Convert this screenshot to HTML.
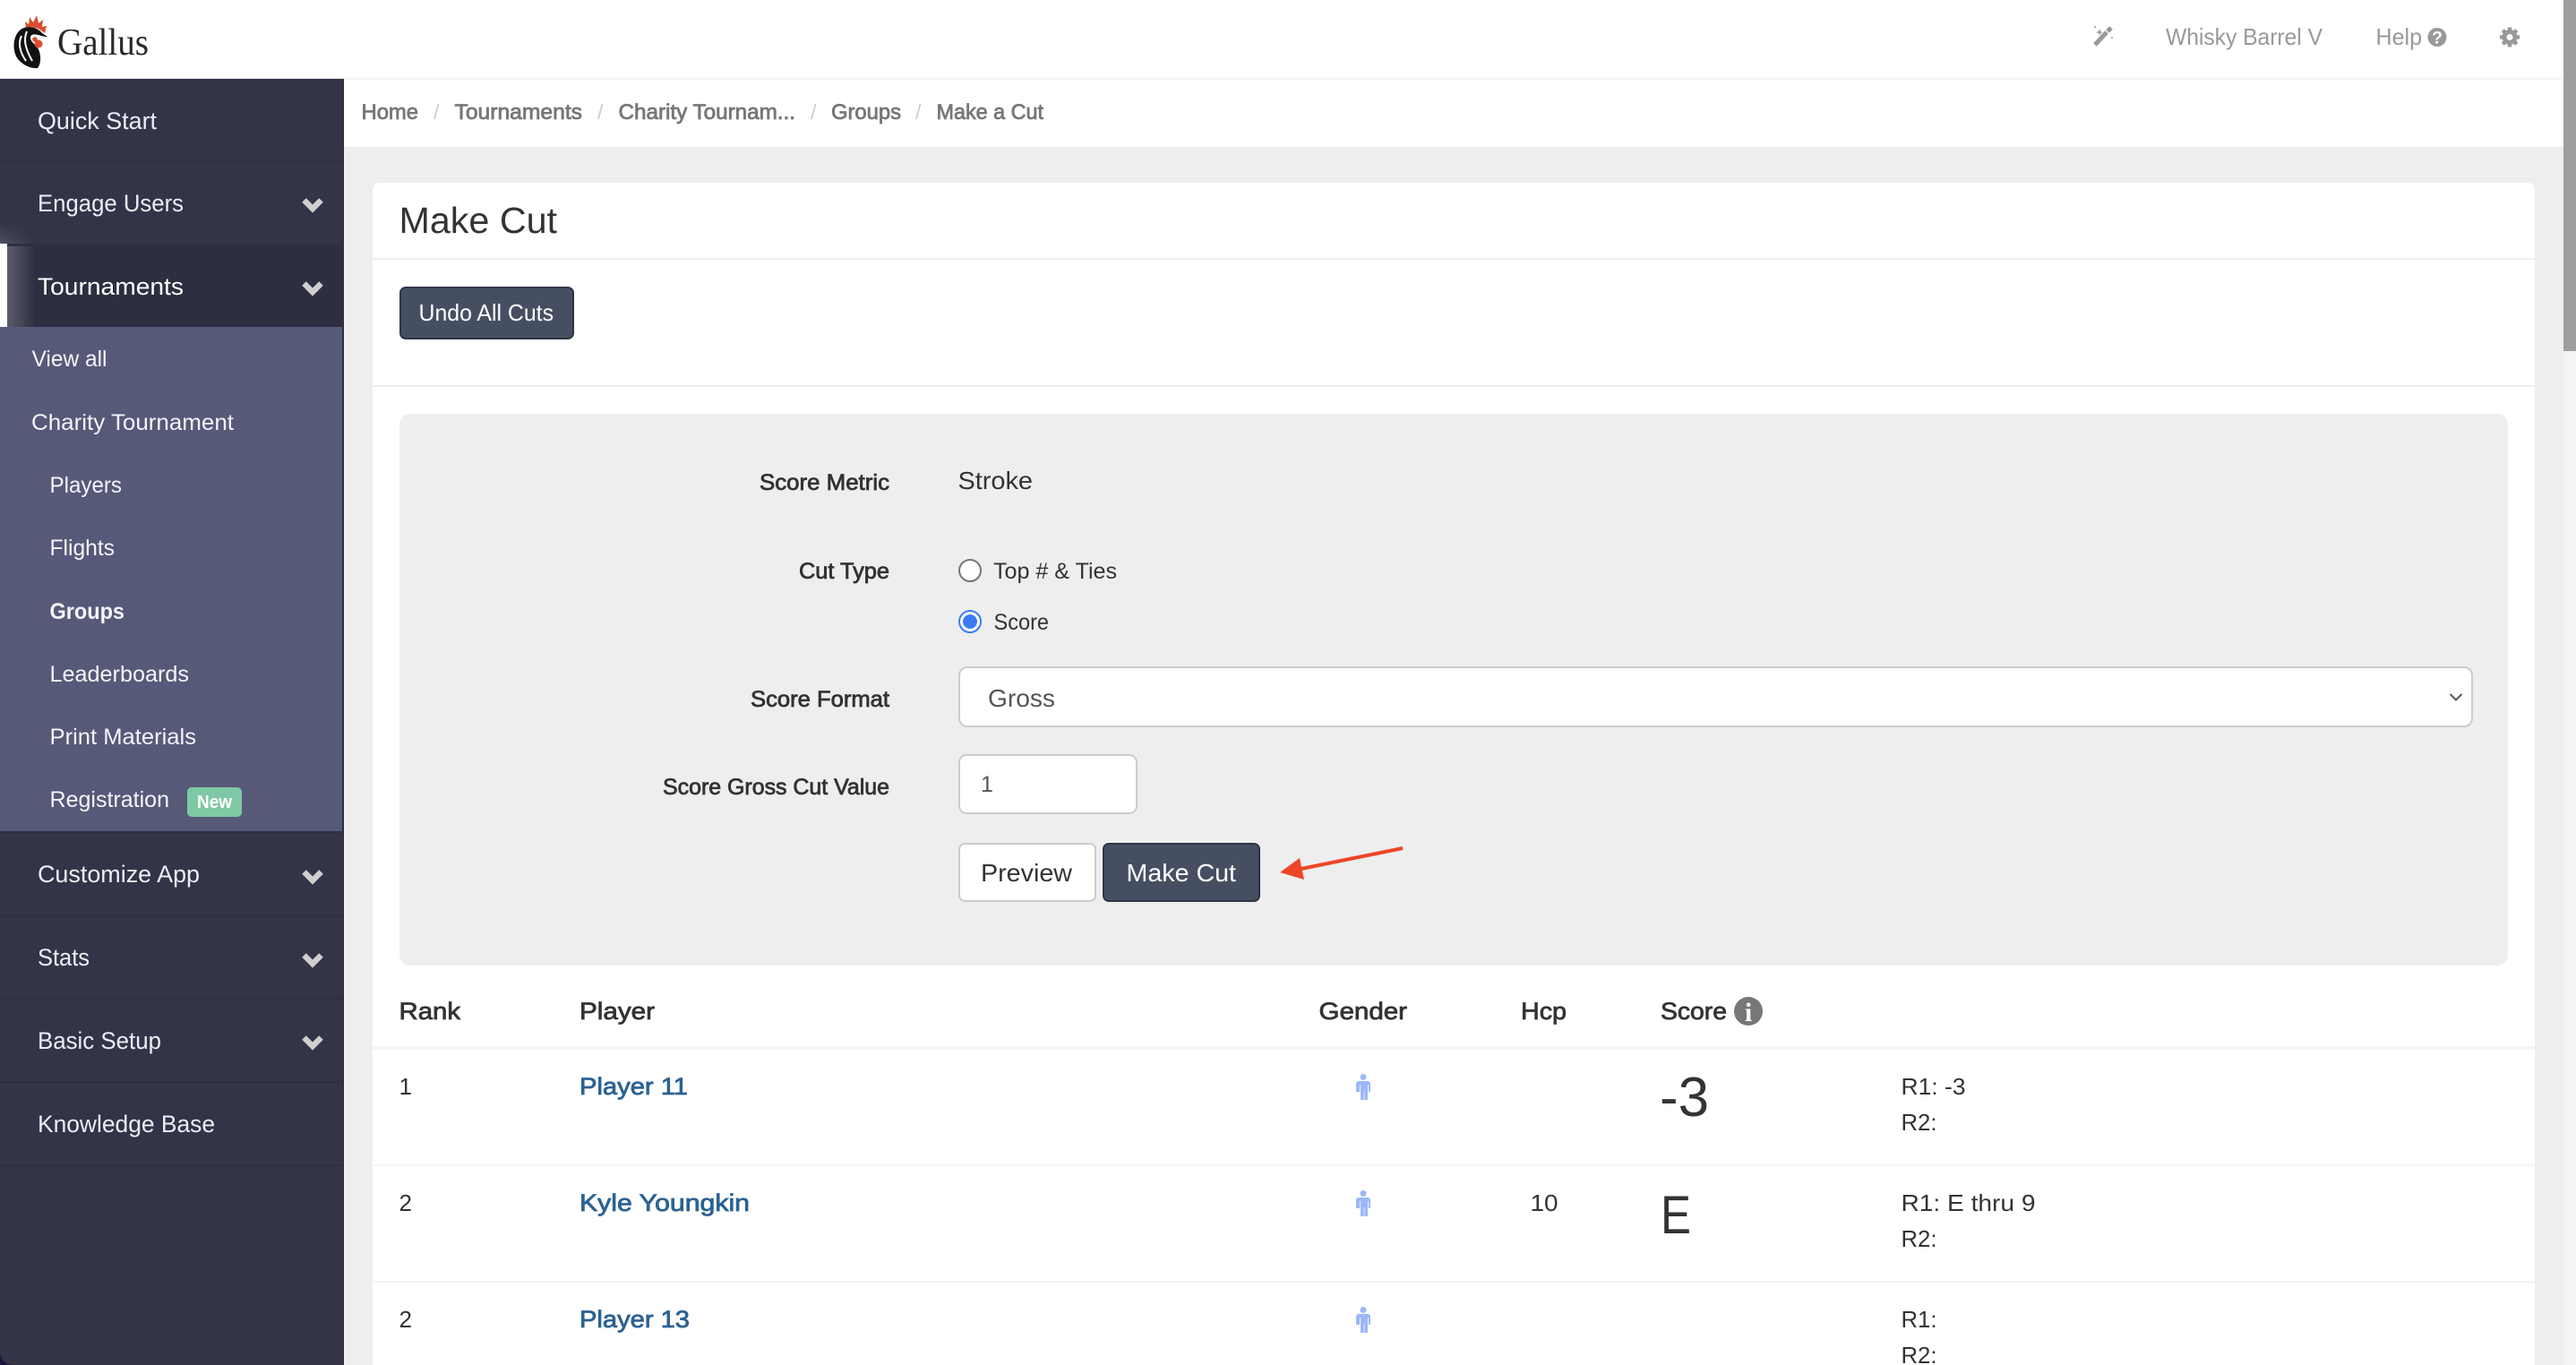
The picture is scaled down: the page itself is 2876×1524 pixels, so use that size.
<!DOCTYPE html>
<html lang="en"><head><meta charset="utf-8"><title>Make Cut</title>
<style>
html,body{margin:0;padding:0;width:2876px;height:1524px;overflow:hidden;background:#eee}
svg{display:block;position:absolute;left:0;top:0}
text{font-family:"Liberation Sans",Arial,sans-serif;white-space:pre}
.nav{font-size:27px;fill:#e9eff5}
.sub{font-size:25px;fill:#f4f5f9}
.semi{stroke-width:.8px}
.bc{font-size:24px;fill:#777;stroke:#777}
.sl{font-size:23px;fill:#ccc}
.lab{font-size:25px;fill:#333;stroke:#333}
.th{font-size:27px;fill:#333;stroke:#333}
.td{font-size:26px;fill:#333}
.lnk{font-size:27px;fill:#2b6293;stroke:#2b6293}
.top{font-size:26px;fill:#999}
</style></head><body>
<svg width="2876" height="1524" viewBox="0 0 2876 1524" xmlns="http://www.w3.org/2000/svg">
<defs>
<linearGradient id="glow" x1="0" x2="1" y1="0" y2="0"><stop offset="0" stop-color="#5b5c6e"/><stop offset="1" stop-color="#2d2e40"/></linearGradient>
<linearGradient id="glow2" x1="0" x2="1" y1="1" y2="0"><stop offset="0" stop-color="#55566a" stop-opacity=".8"/><stop offset="1" stop-color="#333447" stop-opacity="0"/></linearGradient>
<g id="chev"><path d="M339.500 -4.500 L349 5 L358.500 -4.500" fill="none" stroke="#cfcfcf" stroke-width="6.500"/></g>
<g id="man" fill="#9db8f8"><circle cx="0" cy="3.500" r="3.500"/><path d="M-5 8h10a3 3 0 0 1 3 3v9h-2.200v-8h-.8v17h-3.700v-9.500h-.6V29H-3V12h-.8v8H-8v-9a3 3 0 0 1 3-3z"/></g>
</defs>

<!-- page -->
<rect width="2876" height="1524" fill="#eee"/>
<rect width="2862" height="87" fill="#fff"/>
<rect y="87" width="2862" height="2" fill="#f3f3f3"/>
<rect x="384" y="89" width="2478" height="75" fill="#fff"/>

<!-- scrollbar -->
<rect x="2862" width="14" height="1524" fill="#f4f4f4"/>
<rect x="2862" width="14" height="392" fill="#9e9e9e"/>

<!-- logo -->
<path d="M29 32 L28 24 L32 27 L33 19 L37 25 L41 17 L43 26 L48 22 L47 30 L52 29 L50 37 L43 32 L35 30 Z" fill="#d94f32"/>
<path d="M53 41 L47 37 C41 29 27 27 20 36 C14 44 14 58 20 66 C25 72 34 77 42 76 C46 71 46 62 43 55 C41 52 39 50 37 48 C33 44 33 40 36 39 C41 37 46 41 53 41Z" fill="#111"/>
<path d="M24 40 C20 48 22 58 29 68 M30 35 C26 44 28 54 36 68" fill="none" stroke="#fff" stroke-width="2"/>
<path d="M36 39 C39 37 44 40 47 42 L43 52 L38 49 C34 45 33 41 36 39Z" fill="#fff"/>
<circle cx="43" cy="49" r="4.500" fill="#d94f32"/><circle cx="39" cy="44" r="2.800" fill="#d94f32"/>
<text x="64" y="61" font-size="42" textLength="102" lengthAdjust="spacingAndGlyphs" fill="#2a2a2a" style="font-family:'Liberation Serif',serif">Gallus</text>

<!-- top right -->
<path d="M2339 50 L2352 36" stroke="#999" stroke-width="5" fill="none"/>
<path d="M2353 35 L2357 31" stroke="#999" stroke-width="5" fill="none"/>
<path d="M2344 32l1 3 3 1-3 1-1 3-1-3-3-1 3-1z" fill="#999"/><circle cx="2339" cy="30" r="1" fill="#999"/><circle cx="2358" cy="42" r="1" fill="#999"/>
<text class="top" x="2418" y="50" textLength="175" lengthAdjust="spacingAndGlyphs">Whisky Barrel V</text>
<text class="top" x="2652.500" y="50" textLength="51.500" lengthAdjust="spacingAndGlyphs">Help</text>
<circle cx="2721" cy="41.500" r="10.500" fill="#999"/>
<text x="2721" y="48.500" font-size="19" font-weight="700" fill="#fff" text-anchor="middle">?</text>
<g transform="translate(2802 41.500)">
<g fill="#999"><rect x="-2.200" y="-11" width="4.400" height="5"/><rect x="-2.200" y="6" width="4.400" height="5"/><rect x="-2.200" y="-11" width="4.400" height="5" transform="rotate(45)"/><rect x="-2.200" y="6" width="4.400" height="5" transform="rotate(45)"/><rect x="-2.200" y="-11" width="4.400" height="5" transform="rotate(90)"/><rect x="-2.200" y="6" width="4.400" height="5" transform="rotate(90)"/><rect x="-2.200" y="-11" width="4.400" height="5" transform="rotate(135)"/><rect x="-2.200" y="6" width="4.400" height="5" transform="rotate(135)"/></g>
<circle r="6" fill="none" stroke="#999" stroke-width="5"/>
</g>

<!-- sidebar -->
<rect x="0" y="88" width="384" height="1436" fill="#333447"/>
<rect x="382" y="88" width="2" height="1436" fill="#2d2e40"/>
<rect x="0" y="252" width="34" height="20" fill="url(#glow2)"/>
<g fill="#2e2f41">
<rect y="179" width="384" height="2"/><rect y="272" width="384" height="3"/>
<rect y="928" width="384" height="2"/><rect y="1021" width="384" height="2"/><rect y="1114" width="384" height="2"/><rect y="1207" width="384" height="2"/><rect y="1300" width="384" height="2"/>
</g>
<rect y="275" width="382" height="90" fill="#2d2e40"/>
<rect x="8" y="275" width="32" height="90" fill="url(#glow)"/>
<rect y="272" width="8" height="93" fill="#fff"/>
<rect y="365" width="382" height="563" fill="#575979"/>
<path d="M0 1510 V1524 H14 A14 14 0 0 1 0 1510Z" fill="#1d1540"/>

<text class="nav" x="42" y="144" textLength="133" lengthAdjust="spacingAndGlyphs">Quick Start</text>
<text class="nav" x="42" y="236" textLength="163" lengthAdjust="spacingAndGlyphs">Engage Users</text>
<text class="nav" x="42" y="329" textLength="163" lengthAdjust="spacingAndGlyphs" style="fill:#fff">Tournaments</text>
<text class="sub" x="35.500" y="409" textLength="84" lengthAdjust="spacingAndGlyphs">View all</text>
<text class="sub" x="35" y="480" textLength="226" lengthAdjust="spacingAndGlyphs">Charity Tournament</text>
<text class="sub" x="55.500" y="550" textLength="80.500" lengthAdjust="spacingAndGlyphs">Players</text>
<text class="sub" x="55.500" y="620" textLength="72.500" lengthAdjust="spacingAndGlyphs">Flights</text>
<text class="sub" x="55.500" y="691" textLength="83.500" lengthAdjust="spacingAndGlyphs" style="font-weight:700">Groups</text>
<text class="sub" x="55.500" y="761" textLength="155.500" lengthAdjust="spacingAndGlyphs">Leaderboards</text>
<text class="sub" x="55.500" y="831" textLength="163.500" lengthAdjust="spacingAndGlyphs">Print Materials</text>
<text class="sub" x="55.500" y="901" textLength="133.500" lengthAdjust="spacingAndGlyphs">Registration</text>
<rect x="209" y="879" width="61" height="33" rx="5" fill="#7fc8a4"/>
<text x="220" y="902" font-size="20" font-weight="700" fill="#fff" textLength="39" lengthAdjust="spacingAndGlyphs">New</text>
<text class="nav" x="42" y="985" textLength="181" lengthAdjust="spacingAndGlyphs">Customize App</text>
<text class="nav" x="42" y="1078" textLength="58" lengthAdjust="spacingAndGlyphs">Stats</text>
<text class="nav" x="42" y="1171" textLength="138" lengthAdjust="spacingAndGlyphs">Basic Setup</text>
<text class="nav" x="42" y="1264" textLength="198" lengthAdjust="spacingAndGlyphs">Knowledge Base</text>
<use href="#chev" y="228"/><use href="#chev" y="321"/><use href="#chev" y="978"/><use href="#chev" y="1071"/><use href="#chev" y="1163"/>

<!-- breadcrumb -->
<text class="bc semi" x="403.500" y="133" textLength="63.500" lengthAdjust="spacingAndGlyphs">Home</text>
<text class="sl" x="484" y="133">/</text>
<text class="bc semi" x="507.500" y="133" textLength="142.500" lengthAdjust="spacingAndGlyphs">Tournaments</text>
<text class="sl" x="667" y="133">/</text>
<text class="bc semi" x="690.500" y="133" textLength="197.500" lengthAdjust="spacingAndGlyphs">Charity Tournam...</text>
<text class="sl" x="905" y="133">/</text>
<text class="bc semi" x="928" y="133" textLength="78" lengthAdjust="spacingAndGlyphs">Groups</text>
<text class="sl" x="1022" y="133">/</text>
<text class="bc semi" x="1045.500" y="133" textLength="119.500" lengthAdjust="spacingAndGlyphs">Make a Cut</text>

<!-- card -->
<path d="M416 1524 V212 a8 8 0 0 1 8-8 H2822 a8 8 0 0 1 8 8 V1524Z" fill="#fff"/>
<rect x="416" y="288" width="2414" height="2" fill="#eee"/>
<text x="445.500" y="260" font-size="41" fill="#333" textLength="176.500" lengthAdjust="spacingAndGlyphs">Make Cut</text>
<rect x="447" y="321" width="193" height="57" rx="6" fill="#464f62" stroke="#2f3546" stroke-width="2"/>
<text x="467.500" y="358" font-size="26" fill="#fff" textLength="150.500" lengthAdjust="spacingAndGlyphs">Undo All Cuts</text>
<rect x="416" y="430" width="2414" height="2" fill="#eee"/>

<!-- panel -->
<rect x="446" y="462" width="2354" height="616" rx="12" fill="#eee"/>
<text class="lab semi" x="848" y="547" textLength="145" lengthAdjust="spacingAndGlyphs">Score Metric</text>
<text class="lab semi" x="892" y="646" textLength="101" lengthAdjust="spacingAndGlyphs">Cut Type</text>
<text class="lab semi" x="838" y="789" textLength="155" lengthAdjust="spacingAndGlyphs">Score Format</text>
<text class="lab semi" x="740" y="887" textLength="253" lengthAdjust="spacingAndGlyphs">Score Gross Cut Value</text>
<text x="1069.500" y="546" font-size="28" fill="#333" textLength="83.500" lengthAdjust="spacingAndGlyphs">Stroke</text>
<circle cx="1083" cy="637" r="12" fill="#fff" stroke="#767676" stroke-width="2"/>
<text x="1109" y="646" font-size="25" fill="#333" textLength="138" lengthAdjust="spacingAndGlyphs">Top # &amp; Ties</text>
<circle cx="1083" cy="694" r="12" fill="#fff" stroke="#3b7cf5" stroke-width="2"/>
<circle cx="1083" cy="694" r="8" fill="#3b7cf5"/>
<text x="1109.500" y="703" font-size="25" fill="#333" textLength="61.500" lengthAdjust="spacingAndGlyphs">Score</text>

<rect x="1071" y="745" width="1689" height="66" rx="9" fill="#fff" stroke="#ccc" stroke-width="2"/>
<text x="1103" y="789" font-size="28" fill="#555" textLength="75" lengthAdjust="spacingAndGlyphs">Gross</text>
<path d="M2735.500 775 L2742 781.500 L2748.500 775" fill="none" stroke="#555" stroke-width="2"/>

<rect x="1071" y="843" width="198" height="65" rx="8" fill="#fff" stroke="#ccc" stroke-width="2"/>
<text x="1095" y="884" font-size="25" fill="#555">1</text>

<rect x="1071" y="942" width="152" height="64" rx="6" fill="#fff" stroke="#ccc" stroke-width="2"/>
<text x="1095" y="984" font-size="28" fill="#333" textLength="102" lengthAdjust="spacingAndGlyphs">Preview</text>
<rect x="1232" y="942" width="174" height="64" rx="6" fill="#464f62" stroke="#2f3546" stroke-width="2"/>
<text x="1257.500" y="984" font-size="28" fill="#fff" textLength="122.500" lengthAdjust="spacingAndGlyphs">Make Cut</text>

<path d="M1566 947 L1448 971" stroke="#ee4527" stroke-width="4" fill="none"/>
<path d="M1429 974 L1451 958 L1456 982 Z" fill="#ee4527"/>

<!-- table -->
<text class="th semi" x="445.500" y="1138" textLength="68.500" lengthAdjust="spacingAndGlyphs">Rank</text>
<text class="th semi" x="647" y="1138" textLength="84" lengthAdjust="spacingAndGlyphs">Player</text>
<text class="th semi" x="1472.500" y="1138" textLength="98.500" lengthAdjust="spacingAndGlyphs">Gender</text>
<text class="th semi" x="1698" y="1138" textLength="51" lengthAdjust="spacingAndGlyphs">Hcp</text>
<text class="th semi" x="1854" y="1138" textLength="74" lengthAdjust="spacingAndGlyphs">Score</text>
<circle cx="1952" cy="1129" r="16" fill="#777"/>
<text x="1952" y="1140" font-size="30" font-weight="700" fill="#fff" text-anchor="middle" style="font-family:'Liberation Serif',serif">i</text>
<rect x="416" y="1168" width="2414" height="4" fill="#f4f4f4"/>
<rect x="416" y="1300" width="2414" height="2" fill="#f4f4f4"/>
<rect x="416" y="1430" width="2414" height="2" fill="#f4f4f4"/>

<text class="td" x="445.500" y="1222">1</text>
<text class="lnk semi" x="647" y="1222" textLength="121" lengthAdjust="spacingAndGlyphs">Player 11</text>
<use href="#man" x="1522" y="1199"/>
<text x="1853" y="1246" font-size="62" fill="#333" textLength="55" lengthAdjust="spacingAndGlyphs">-3</text>
<text class="td" x="2122.500" y="1222" textLength="72" lengthAdjust="spacingAndGlyphs">R1: -3</text>
<text class="td" x="2122.500" y="1262" textLength="40" lengthAdjust="spacingAndGlyphs">R2:</text>

<text class="td" x="445.500" y="1352">2</text>
<text class="lnk semi" x="647" y="1352" textLength="190" lengthAdjust="spacingAndGlyphs">Kyle Youngkin</text>
<use href="#man" x="1522" y="1329"/>
<text class="td" x="1708.500" y="1352" textLength="31" lengthAdjust="spacingAndGlyphs">10</text>
<text x="1854" y="1377" font-size="60" fill="#333" textLength="34" lengthAdjust="spacingAndGlyphs">E</text>
<text class="td" x="2122.500" y="1352" textLength="150" lengthAdjust="spacingAndGlyphs">R1: E thru 9</text>
<text class="td" x="2122.500" y="1392" textLength="40" lengthAdjust="spacingAndGlyphs">R2:</text>

<text class="td" x="445.500" y="1482">2</text>
<text class="lnk semi" x="647" y="1482" textLength="123" lengthAdjust="spacingAndGlyphs">Player 13</text>
<use href="#man" x="1522" y="1459"/>
<text class="td" x="2122.500" y="1482" textLength="40" lengthAdjust="spacingAndGlyphs">R1:</text>
<text class="td" x="2122.500" y="1522" textLength="40" lengthAdjust="spacingAndGlyphs">R2:</text>
</svg>
</body></html>
